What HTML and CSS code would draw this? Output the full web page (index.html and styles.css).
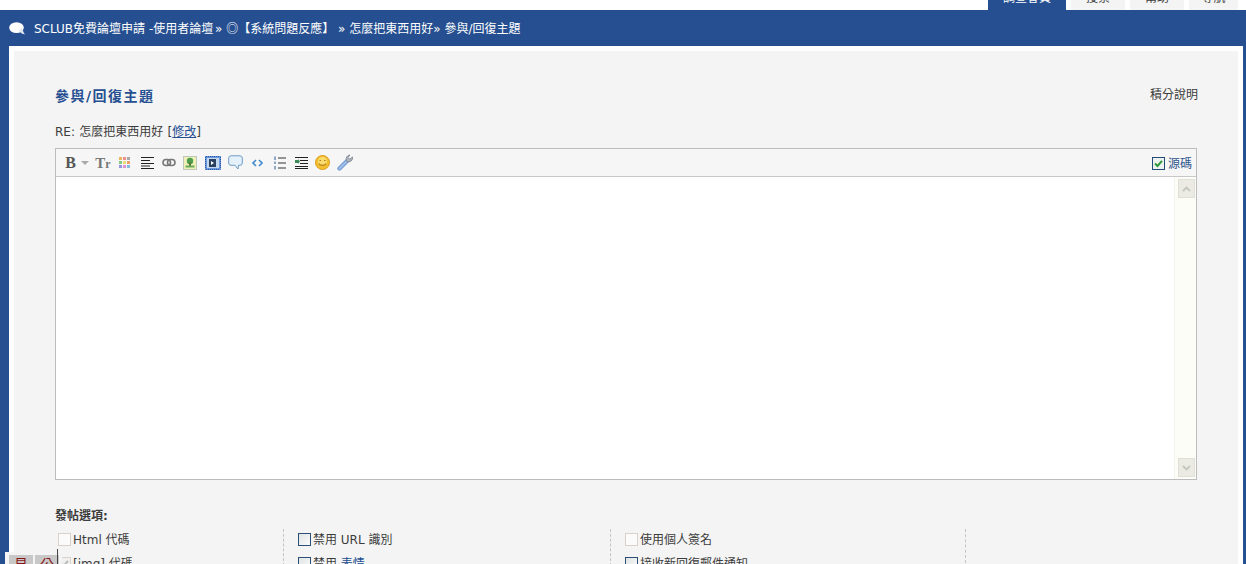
FILE: index.html
```html
<!DOCTYPE html>
<html lang="zh-Hant">
<head>
<meta charset="utf-8">
<title>參與/回復主題</title>
<link rel="stylesheet" href="styles.css">
</head>
<body>
<nav class="tabs">
  <a class="tab tab-active"><span>調查會員</span></a>
  <a class="tab tab-w54"><span>搜索</span></a>
  <a class="tab tab-w54"><span>幫助</span></a>
  <a class="tab tab-w49"><span>導航</span></a>
</nav>
<div class="main">
  <div class="crumbs">
    <svg class="bubble" width="16" height="13" viewBox="0 0 16 13"><ellipse cx="7.500" cy="5.600" rx="7.300" ry="5.400" fill="#fff"/><path d="M10 9l2.500-3L15.800 12.500C14 12.200 11.500 11 10 9z" fill="#dfe6f0"/></svg>
    <span>SCLUB免費論壇申請 -使用者論壇<i class="tight"> </i>» <b class="cjk">◎</b>【系統問題反應】 » 怎麼把東西用好» 參與/回復主題</span>
  </div>
  <div class="sheet">
    <div class="panel">
      <div class="head">
        <h1 class="title">參與/回復主題</h1>
        <a class="help">積分說明</a>
      </div>
      <p class="subject">RE: 怎麼把東西用好 [<a class="link">修改</a>]</p>
      <div class="editor">
        <div class="toolbar">
          <span class="tb tb-b">B</span>
          <span class="tb tb-arrow"><svg width="8" height="4" viewBox="0 0 8 4"><path d="M0 0h8L4 4z" fill="#aaa"/></svg></span>
          <span class="tb tb-tr">T<small>r</small></span>
          <span class="tb"><svg class="shift-l" width="13" height="13" viewBox="0 0 13 13"><rect x="1" y="1" width="3" height="3" fill="#ecb45c"/><rect x="5" y="1" width="3" height="3" fill="#ea9090"/><rect x="9" y="1" width="3" height="3" fill="#a8a8a8"/><rect x="1" y="5" width="3" height="3" fill="#84ca84"/><rect x="5" y="5" width="3" height="3" fill="#ecdc78"/><rect x="9" y="5" width="3" height="3" fill="#eca068"/><rect x="1" y="9" width="3" height="3" fill="#9696de"/><rect x="5" y="9" width="3" height="3" fill="#dc94cc"/><rect x="9" y="9" width="3" height="3" fill="#84bcdc"/></svg></span>
          <span class="tb"><svg width="13" height="12" viewBox="0 0 13 12"><path d="M0 .5h13M0 3.500h9M0 6.500h13M0 9h9M0 11.500h13" stroke="#222" fill="none"/></svg></span>
          <span class="tb"><svg width="14" height="9" viewBox="0 0 14 9"><rect x="1" y="1.500" width="7.500" height="6" rx="3" fill="none" stroke="#777" stroke-width="1.600"/><rect x="5.500" y="1.500" width="7.500" height="6" rx="3" fill="none" stroke="#777" stroke-width="1.600"/></svg></span>
          <span class="tb"><svg class="shift-l" width="14" height="14" viewBox="0 0 14 14"><rect x=".5" y=".5" width="13" height="13" fill="#eef0b8" stroke="#bcc8b8"/><circle cx="7" cy="5" r="3.200" fill="#4e9e4e"/><rect x="6" y="6" width="2" height="4" fill="#5a7a3a"/><rect x="2.500" y="9.500" width="9" height="2" fill="#6aaa5a"/></svg></span>
          <span class="tb"><svg width="16" height="14" viewBox="0 0 16 14"><rect width="16" height="14" fill="#6c98da"/><path d="M.5 1v12M15.500 1v12M1 .5h14M1 13.500h14" stroke="#2456ac" stroke-dasharray="1 1"/><rect x="2" y="2" width="12" height="10" fill="#c4d8f0"/><rect x="4" y="3" width="7" height="8" fill="#2a4260"/><path d="M6 5l3 2-3 2z" fill="#fff"/></svg></span>
          <span class="tb"><svg width="15" height="15" viewBox="0 0 15 15"><path d="M3 .8h9A2.300 2.300 0 0 1 14.300 3v5A2.300 2.300 0 0 1 12 10.300h-1.500L10 14 7 10.300H3A2.300 2.300 0 0 1 .7 8V3A2.300 2.300 0 0 1 3 .8z" fill="#e4f0fa" stroke="#6f9cc8"/></svg></span>
          <span class="tb"><svg width="11" height="8" viewBox="0 0 11 8"><path d="M4 1L1 4l3 3M7 1l3 3-3 3" fill="none" stroke="#4a8cd0" stroke-width="1.700"/></svg></span>
          <span class="tb"><svg class="shift-r" width="13" height="14" viewBox="0 0 13 14"><path d="M5 2h8M5 7h8M5 12h8" stroke="#333" fill="none"/><path d="M1 .5h2v3.500H1zM1 5.500h2V8H1zM1 10h2v3.500H1z" fill="#8fa8c8"/></svg></span>
          <span class="tb"><svg width="13" height="12" viewBox="0 0 13 12"><path d="M0 .5h13M5 3.500h8M5 6.500h8M0 9.500h13M0 11.500h13" stroke="#222" fill="none"/><path d="M0 3h3V2l2 2.500L3 7V6H0z" fill="#3d8a5a"/></svg></span>
          <span class="tb"><svg class="shift-l" width="15" height="15" viewBox="0 0 15 15"><circle cx="7.500" cy="7.500" r="7" fill="#f2c02e" stroke="#dc9a1a"/><circle cx="7.500" cy="6.500" r="4.500" fill="#f9dc70"/><path d="M4 8.500c1 2.500 6 2.500 7 0" fill="none" stroke="#b87a10" stroke-width="1.200"/><path d="M4.500 5.500h1.500M9 5.500h1.500" stroke="#b87a10" stroke-width="1.200"/></svg></span>
          <span class="tb"><svg width="17" height="17" viewBox="0 0 17 17"><path d="M2.500 14.500L10 7" stroke="#7ca2d8" stroke-width="4.400" stroke-linecap="round"/><path d="M2.500 14.500L9 8" stroke="#a8c4ea" stroke-width="1.400" stroke-linecap="round"/><path d="M9.500 6.500a4 4 0 0 1 3.500-5.500l-2 2.500 1.800 1.800L15.500 3a4 4 0 0 1-5.500 4.500z" fill="#b0b6be" stroke="#868e98"/></svg></span>
          <label class="source"><span class="source-box"><svg width="11" height="11" viewBox="0 0 11 11"><path d="M2 5.500l2.500 2.500L9 2.800" fill="none" stroke="#2f9a3c" stroke-width="2"/></svg></span>源碼</label>
        </div>
        <div class="editor-body">
          <div class="area"></div>
          <div class="scroll">
            <span class="sbtn"><svg width="9" height="6" viewBox="0 0 9 6"><path d="M1 5l3.500-3.500L8 5" fill="none" stroke="#c4c8bc" stroke-width="1.800"/></svg></span>
            <span class="sbtn"><svg width="9" height="6" viewBox="0 0 9 6"><path d="M1 1l3.500 3.500L8 1" fill="none" stroke="#c4c8bc" stroke-width="1.800"/></svg></span>
          </div>
        </div>
      </div>
      <div class="options">
        <h2 class="options-title">發帖選項:</h2>
        <div class="grid">
          <div class="col col-1">
            <div class="opt"><i class="box"></i>Html 代碼</div>
            <div class="opt"><i class="box box-on"><svg width="11" height="11" viewBox="0 0 11 11"><path d="M2 5.500l2.500 2.500L9 2.800" fill="none" stroke="#b8bcb8" stroke-width="2"/></svg></i>[img] 代碼</div>
          </div>
          <div class="col col-2">
            <div class="opt"><i class="box box-dark"></i>禁用 URL 識別</div>
            <div class="opt"><i class="box box-dark"></i>禁用 <a class="link-plain">表情</a></div>
          </div>
          <div class="col col-3">
            <div class="opt"><i class="box"></i>使用個人簽名</div>
            <div class="opt"><i class="box box-dark"></i>接收新回復郵件通知</div>
          </div>
          <div class="col col-4"></div>
        </div>
      </div>
    </div>
  </div>
</div>
<div class="floatbox"><span class="cell">見</span><span class="cell">公</span></div>
</body>
</html>
```
FILE: styles.css
```css
html, body {
  margin: 0;
  padding: 0;
  height: 564px;
  overflow: hidden;
  background: #fff;
}
body {
  position: relative;
  font: 12px/16px "DejaVu Sans", "Noto Sans CJK TC", sans-serif;
  color: #3c3c3c;
}
.tabs {
  display: flex;
  justify-content: flex-end;
  gap: 5px;
  height: 10px;
  padding-right: 8px;
}
.tab {
  display: block;
  overflow: hidden;
  height: 10px;
  text-align: center;
  background: #f4f4f4;
  color: #3c3c3c;
}
.tab span {
  display: block;
  margin-top: -12px;
  line-height: 20px;
}
.tab-active { width: 78px; background: #254f91; color: #fff; }
.tab-w54 { width: 54px; }
.tab-w49 { width: 49px; }
.main {
  background: #254f91;
  padding: 0 3px 0 9px;
}
.crumbs {
  display: flex;
  align-items: center;
  height: 36px;
  color: #fff;
  white-space: pre;
}
.tight { margin-right: -2px; }
.cjk {
  font-family: "Noto Sans CJK TC", sans-serif;
  font-weight: normal;
}
.bubble {
  margin-right: 9px;
  margin-top: 1px;
}
.sheet {
  background: #fff;
  padding: 5px;
  height: 600px;
}
.panel {
  background: #f4f4f4;
  height: 600px;
  padding: 36px 41px 0;
}
.head {
  display: flex;
  justify-content: space-between;
  align-items: flex-start;
  height: 25px;
}
.title {
  margin: 0;
  font-size: 14px;
  line-height: 18px;
  font-weight: bold;
  letter-spacing: 1.5px;
  color: #254f91;
}
.help {
  margin-right: -1px;
  line-height: 16px;
}
.subject {
  margin: 12px 0 0;
  height: 24px;
  line-height: 16px;
  word-spacing: 0.5px;
}
.link {
  color: #254f91;
  text-decoration: underline;
}
.link-plain { color: #254f91; }
.editor {
  border: 1px solid #bcbcbc;
  height: 330px;
}
.toolbar {
  display: flex;
  align-items: center;
  height: 27px;
  padding-left: 5px;
  border-bottom: 1px solid #c8c8c8;
  background: #f6f6f6;
}
.tb {
  display: flex;
  align-items: center;
  justify-content: center;
  width: 22px;
  height: 20px;
  color: #555;
}
.shift-l { margin-left: -2px; }
.shift-r { margin-left: 1px; }
.tb-b {
  width: 19px;
  font: bold 16px/20px "Liberation Serif", serif;
}
.tb-arrow { width: 10px; margin-right: 2px; }
.tb-tr {
  font: bold 15px/20px "Liberation Serif", serif;
  color: #777;
}
.tb-tr small { font-size: 12px; margin-top: 2px; }
.source {
  display: flex;
  align-items: center;
  gap: 3px;
  margin-left: auto;
  margin-right: 4px;
  color: #2f558c;
  padding-top: 2px;
}
.source-box {
  display: flex;
  width: 11px;
  height: 11px;
  border: 1px solid #234a78;
  background: #eef2ee;
}
.editor-body {
  display: flex;
  height: 302px;
  background: #fff;
}
.area { flex: 1; }
.scroll {
  display: flex;
  flex-direction: column;
  justify-content: space-between;
  width: 17px;
  padding: 2px 1px 2px 3px;
  background: #fdfdf8;
  border-left: 1px solid #f4f4ee;
}
.sbtn {
  display: flex;
  align-items: center;
  justify-content: center;
  height: 19px;
  background: #ebebe4;
  border: 1px solid #e0e0d8;
  box-sizing: border-box;
}
.options-title {
  margin: 28px 0 0;
  font-size: 12px;
  line-height: 16px;
  font-weight: bold;
  color: #3c3c3c;
}
.grid {
  display: grid;
  grid-template-columns: 228px 327px 355px 1fr;
  margin-top: 5px;
}
.col {
  display: flex;
  flex-direction: column;
  gap: 4px;
  padding-top: 1px;
  padding-left: 14px;
  border-left: 1px dashed #c4c4c4;
  height: 60px;
}
.col-1 { border-left: 0; padding-left: 3px; }
.col-4 { padding: 0; }
.opt {
  display: flex;
  align-items: center;
  height: 20px;
  white-space: pre;
}
.box {
  display: block;
  box-sizing: border-box;
  width: 13px;
  height: 13px;
  margin-top: -2px;
  margin-right: 2px;
  background: #fbfbfb;
  border: 1px solid #d8d2ca;
}
.box svg { display: block; }
.box-on { background: #f0f0f0; }
.box-dark {
  border-color: #2b4f78;
  background: linear-gradient(135deg, #e0e4e4, #fbfbfb);
}
.floatbox {
  position: absolute;
  left: 5px;
  top: 552px;
  display: flex;
  gap: 2px;
  width: 50px;
  height: 30px;
  padding: 3px 3px 0 4px;
  background: #f4f4f4;
}
.floatbox::after {
  content: "";
  position: absolute;
  left: 52px;
  top: -3px;
  width: 1px;
  height: 20px;
  background: #444;
}
.cell {
  flex: 1;
  text-align: center;
  background: #c8c8c8;
  color: #8a1414;
  font-size: 14px;
  line-height: 18px;
}
```
